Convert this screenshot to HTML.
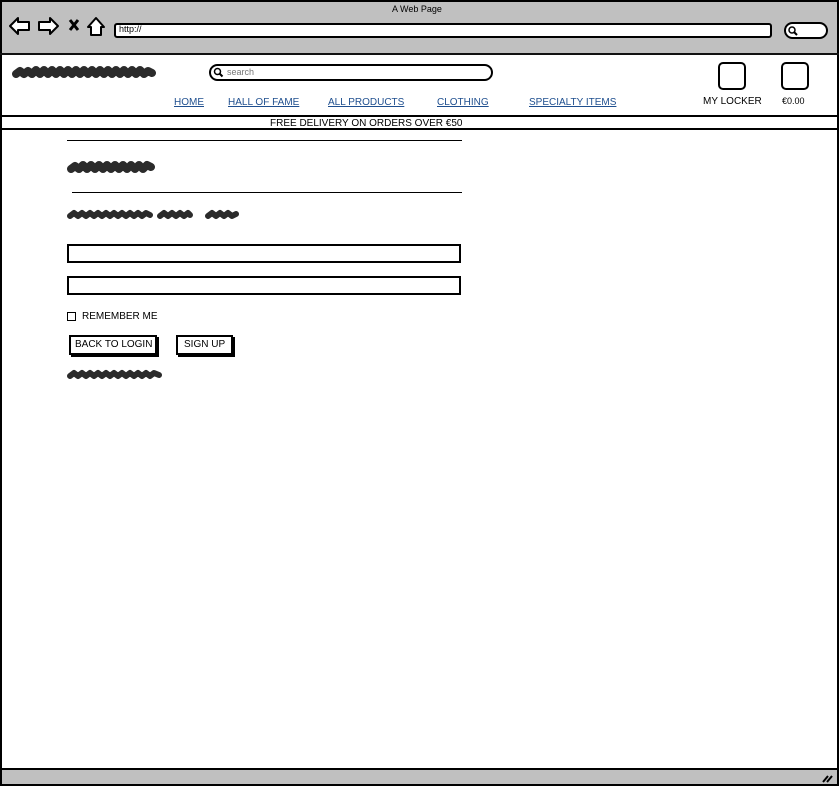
<!DOCTYPE html>
<html><head><meta charset="utf-8"><style>
*{margin:0;padding:0;box-sizing:border-box}
body{width:839px;height:786px;position:relative;background:#fff;font-family:"Liberation Sans",sans-serif;overflow:hidden;color:#000}
.a{position:absolute}
.t{font-size:10px;white-space:nowrap}
.nav{font-size:10px;color:#1f4f8f;text-decoration:underline;position:absolute;top:97px}
</style></head><body>
<div class="a" style="left:0;top:0;width:839px;height:786px;border:2px solid #000"></div>
<div class="a" style="left:2px;top:2px;width:835px;height:51px;background:#c0c0c0"></div>
<div class="a" style="left:0;top:53px;width:839px;height:2px;background:#111"></div>
<div class="a t" style="left:392px;top:4px;font-size:9px">A Web Page</div>
<svg class="a" style="left:8px;top:15px" width="100" height="24" viewBox="0 0 100 24">
<path d="M2 11 L10 3 L10 7 L21 7 L21 15 L10 15 L10 19 Z" fill="#fff" stroke="#000" stroke-width="2" stroke-linejoin="round"/>
<path d="M50 11 L42 3 L42 7 L31 7 L31 15 L42 15 L42 19 Z" fill="#fff" stroke="#000" stroke-width="2" stroke-linejoin="round"/>
<path d="M62 5 L70 15 M70 5 L62 15" stroke="#000" stroke-width="3"/>
<path d="M80 12 L88 3 L96 12 L93 12 L93 20 L83 20 L83 12 Z" fill="#fff" stroke="#000" stroke-width="2" stroke-linejoin="round"/>
</svg>
<div class="a" style="left:114px;top:23px;width:658px;height:15px;background:#fff;border:2px solid #000;border-radius:3px"></div>
<div class="a t" style="left:119px;top:24px;font-size:9px">http://</div>
<div class="a" style="left:784px;top:22px;width:44px;height:17px;background:#fff;border:2px solid #000;border-radius:9px"></div>
<svg class="a" style="left:787px;top:25px" width="12" height="12"><circle cx="5" cy="5" r="3" fill="none" stroke="#000" stroke-width="1.5"/><path d="M7 7 L10 10" stroke="#000" stroke-width="2"/></svg>
<svg class="a" style="left:10px;top:62px" width="148" height="20"><path d="M6 12 L10 9 L14 12 L18 9 L22 12 L26 8 L30 12 L34 8 L38 12 L42 8 L46 12 L50 8 L54 12 L58 8 L62 12 L66 8 L70 12 L74 8 L78 12 L82 8 L86 12 L90 8 L94 12 L98 8 L102 12 L106 8 L110 12 L114 8 L118 12 L122 8 L126 12 L130 8 L134 12 L138 9 L142 11" fill="none" stroke="#2b2b2b" stroke-width="8" stroke-linecap="round" stroke-linejoin="round"/></svg>
<div class="a" style="left:209px;top:64px;width:284px;height:17px;border:2px solid #000;border-radius:9px"></div>
<svg class="a" style="left:213px;top:67px" width="11" height="11"><circle cx="4.5" cy="4.5" r="3" fill="none" stroke="#000" stroke-width="1.5"/><path d="M6.5 6.5 L9.5 9.5" stroke="#000" stroke-width="2"/></svg>
<div class="a t" style="left:227px;top:67px;font-size:9px;color:#777">search</div>
<div class="nav" style="left:174px">HOME</div>
<div class="nav" style="left:228px">HALL OF FAME</div>
<div class="nav" style="left:328px">ALL PRODUCTS</div>
<div class="nav" style="left:437px">CLOTHING</div>
<div class="nav" style="left:529px">SPECIALTY ITEMS</div>
<div class="a" style="left:718px;top:62px;width:28px;height:28px;border:2px solid #000;border-radius:5px"></div>
<div class="a" style="left:781px;top:62px;width:28px;height:28px;border:2px solid #000;border-radius:5px"></div>
<div class="a t" style="left:703px;top:96px">MY LOCKER</div>
<div class="a t" style="left:782px;top:96px;font-size:9px">€0.00</div>
<div class="a" style="left:0;top:115px;width:839px;height:15px;border:2px solid #000"></div>
<div class="a t" style="left:270px;top:118px">FREE DELIVERY ON ORDERS OVER €50</div>
<div class="a" style="left:67px;top:140px;width:395px;height:1px;background:#000"></div>
<svg class="a" style="left:66px;top:156px" width="92" height="20"><path d="M5 13 L9 10 L13 13 L17 9 L21 13 L25 9 L29 13 L33 9 L37 13 L41 9 L45 13 L49 9 L53 13 L57 9 L61 13 L65 9 L69 13 L73 9 L77 13 L81 9 L85 11" fill="none" stroke="#2b2b2b" stroke-width="8" stroke-linecap="round" stroke-linejoin="round"/></svg>
<div class="a" style="left:72px;top:192px;width:390px;height:1px;background:#000"></div>
<svg class="a" style="left:66px;top:206px" width="176" height="16"><path d="M4 10 L8 7 L12 10 L16 7 L20 10 L24 7 L28 10 L32 7 L36 10 L40 7 L44 10 L48 7 L52 10 L56 7 L60 10 L64 7 L68 10 L72 7 L76 10 L80 7 L84 9 M94 10 L98 7 L102 10 L106 7 L110 10 L114 7 L118 10 L122 7 L124 9 M142 10 L146 7 L150 10 L154 7 L158 10 L162 7 L166 10 L170 8" fill="none" stroke="#2b2b2b" stroke-width="6" stroke-linecap="round" stroke-linejoin="round"/></svg>
<div class="a" style="left:67px;top:244px;width:394px;height:19px;border:2px solid #000"></div>
<div class="a" style="left:67px;top:276px;width:394px;height:19px;border:2px solid #000"></div>
<div class="a" style="left:67px;top:312px;width:9px;height:9px;border:1px solid #000"></div>
<div class="a t" style="left:82px;top:311px">REMEMBER ME</div>
<div class="a" style="left:69px;top:335px;width:88px;height:20px;border:2px solid #000;box-shadow:2px 2px 0 #000"></div>
<div class="a t" style="left:75px;top:339px">BACK TO LOGIN</div>
<div class="a" style="left:176px;top:335px;width:57px;height:20px;border:2px solid #000;box-shadow:2px 2px 0 #000"></div>
<div class="a t" style="left:184px;top:339px">SIGN UP</div>
<svg class="a" style="left:66px;top:367px" width="100" height="14"><path d="M4 9 L8 6 L12 9 L16 6 L20 9 L24 6 L28 9 L32 6 L36 9 L40 6 L44 9 L48 6 L52 9 L56 6 L60 9 L64 6 L68 9 L72 6 L76 9 L80 6 L84 9 L88 6 L93 8" fill="none" stroke="#2b2b2b" stroke-width="6" stroke-linecap="round" stroke-linejoin="round"/></svg>
<div class="a" style="left:2px;top:768px;width:835px;height:16px;background:#c0c0c0;border-top:2px solid #000"></div>
<svg class="a" style="left:822px;top:774px" width="12" height="10"><path d="M1 8 L6 2 M5 8 L10 2" stroke="#000" stroke-width="2"/></svg>
</body></html>
